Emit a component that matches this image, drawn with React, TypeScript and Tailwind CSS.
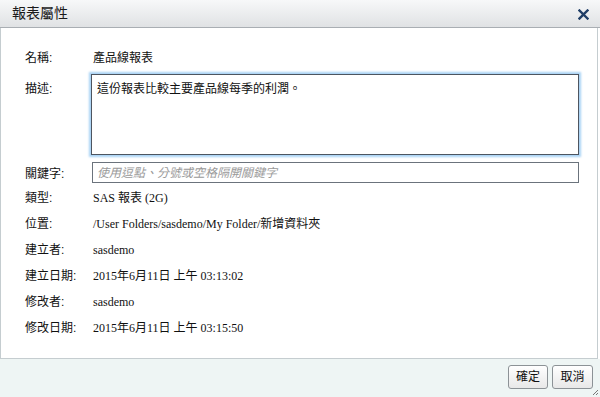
import React from "react";

function Row({ label, value }: { label: string; value: string }) {
  return (
    <div className="flex h-[26px] items-center">
      <div className="w-[68px] shrink-0 text-[12px] text-[#111] font-['Liberation_Sans','Noto_Sans_CJK_TC',sans-serif]">
        {label}
      </div>
      <div className="text-[12px] text-[#111] font-['Liberation_Serif','Noto_Sans_CJK_TC',serif]">
        {value}
      </div>
    </div>
  );
}

export default function App() {
  return (
    <div className="w-[600px] h-[397px] flex flex-col bg-white overflow-hidden font-['Liberation_Sans','Noto_Sans_CJK_TC',sans-serif]">
      {/* title bar */}
      <div className="h-[28px] shrink-0 flex items-center justify-between pl-[12px] pr-[11px] border-b border-[#a9aeb3] bg-gradient-to-b from-[#f7f8f9] to-[#e0e2e4]">
        <span className="text-[14px] text-[#1a1a1a]">報表屬性</span>
        <svg width="11" height="11" viewBox="0 0 11 11" className="mt-[1px]">
          <path d="M1.5 1.5 L9.5 9.5 M9.5 1.5 L1.5 9.5" stroke="#1f3d66" strokeWidth="2.4" strokeLinecap="square" />
        </svg>
      </div>

      {/* content */}
      <div className="flex-1 w-[598px] border-l border-r border-b border-[#c5cdd0] pt-[17px] pl-[24px]">
        <Row label="名稱:" value="產品線報表" />
        <div className="flex mt-[3px]">
          <div className="w-[66px] shrink-0 pt-[6px] text-[12px] text-[#111]">描述:</div>
          <div className="w-[488px] h-[81px] border border-[#4d5560] shadow-[0_0_2px_2px_#a9d3f5] px-[5px] pt-[5px] text-[12px] text-[#111] font-['Liberation_Serif','Noto_Sans_CJK_TC',serif]">
            這份報表比較主要產品線每季的利潤。
          </div>
        </div>
        <div className="flex items-center mt-[7px]">
          <div className="w-[67px] shrink-0 text-[12px] text-[#111] pt-[2px]">關鍵字:</div>
          <div className="w-[487px] h-[21px] border border-[#6b737c] flex items-center px-[4px] text-[12px] italic text-[#9a9a9a]">
            使用逗點、分號或空格隔開關鍵字
          </div>
        </div>
        <div className="mt-[2px]">
          <Row label="類型:" value="SAS 報表 (2G)" />
          <Row label="位置:" value="/User Folders/sasdemo/My Folder/新增資料夾" />
          <Row label="建立者:" value="sasdemo" />
          <Row label="建立日期:" value="2015年6月11日 上午 03:13:02" />
          <Row label="修改者:" value="sasdemo" />
          <Row label="修改日期:" value="2015年6月11日 上午 03:15:50" />
        </div>
      </div>

      {/* footer */}
      <div className="h-[38px] shrink-0 bg-[#eef5f4] relative flex items-start justify-end gap-[4px] pt-[6px] pr-[7px]">
        <button className="w-[40px] h-[24px] rounded-[3px] border border-[#8c9296] bg-gradient-to-b from-white to-[#e8e8e8] text-[12px] text-[#111]">
          確定
        </button>
        <button className="w-[41px] h-[24px] rounded-[3px] border border-[#8c9296] bg-gradient-to-b from-white to-[#e8e8e8] text-[12px] text-[#111]">
          取消
        </button>
        <svg width="7" height="7" viewBox="0 0 7 7" className="absolute right-[1px] bottom-[1px]">
          <path d="M1 6 L6 1 M4 6 L6 4" stroke="#777" strokeWidth="1" />
        </svg>
      </div>
    </div>
  );
}
